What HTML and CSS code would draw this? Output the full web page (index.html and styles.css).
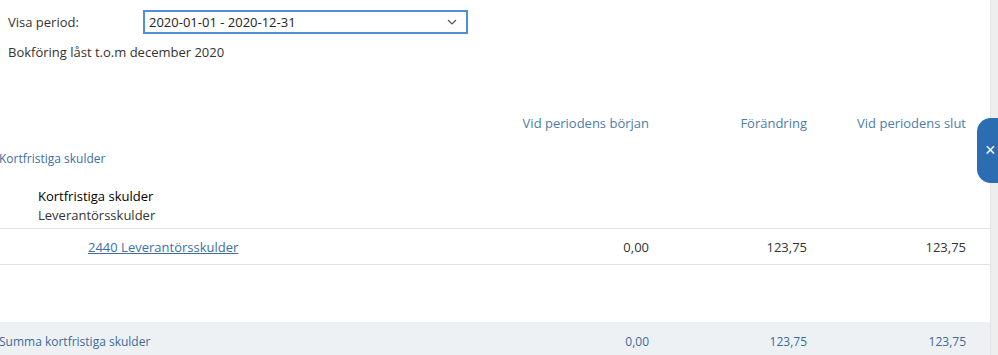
FILE: index.html
```html
<!DOCTYPE html>
<html lang="sv">
<head>
    <meta charset="UTF-8">
    <title>Balansrapport</title>
    <link rel="stylesheet" href="styles.css">
</head>
<body>

    <div class="page">
        <div class="filters">
            <div class="filter-row">
                <label class="filter-label" for="period">Visa period:</label>
                <div class="select">
                    <span>2020-01-01 - 2020-12-31</span>
                    <svg width="10" height="6" viewBox="0 0 10 6"><path d="M1 1l4 4 4-4" fill="none" stroke="#555" stroke-width="1.2"/></svg>
                </div>
            </div>
            <div class="locked">Bokföring låst t.o.m december 2020</div>
        </div>

        <div class="report">
            <div class="row head">
                <div></div>
                <div class="num">Vid periodens början</div>
                <div class="num">Förändring</div>
                <div class="num">Vid periodens slut</div>
            </div>

            <div class="section-title">Kortfristiga skulder</div>

            <div class="group">
                <div class="group-title">Kortfristiga skulder</div>
                <div class="group-sub">Leverantörsskulder</div>
            </div>

            <div class="row account">
                <div><a href="#">2440 Leverantörsskulder</a></div>
                <div class="num">0,00</div>
                <div class="num">123,75</div>
                <div class="num">123,75</div>
            </div>

            <div class="row total">
                <div class="total-label">Summa kortfristiga skulder</div>
                <div class="num">0,00</div>
                <div class="num">123,75</div>
                <div class="num">123,75</div>
            </div>
        </div>

        <div class="scroll-track"></div>
        <button class="side-tab">&times;</button>
    </div>

</body>
</html>
```

FILE: styles.css
```css
body {
    margin: 0;
    font-family: "Open Sans", Arial, sans-serif;
    font-size: 13px;
    color: #333;
    background: #fff;
    overflow: hidden;
}
.page {
    position: relative;
    height: 355px;
    padding-right: 8px;
}
.filters {
    padding: 10px 8px 0;
}
.filter-row {
    display: flex;
    align-items: center;
    height: 24px;
}
.filter-label {
    width: 135px;
}
.select {
    box-sizing: border-box;
    width: 325px;
    height: 24px;
    border: 2px solid #4d90d6;
    display: flex;
    align-items: center;
    justify-content: space-between;
    padding: 0 9px 0 4px;
    color: #222;
}
.locked {
    margin-top: 9px;
    line-height: 18px;
}
.report {
    margin-top: 52px;
}
.row {
    display: grid;
    grid-template-columns: 1fr 158px 158px 159px;
    padding-right: 24px;
    align-items: center;
}
.num {
    text-align: right;
}
.head {
    height: 20px;
    color: #4f7ca6;
}
.section-title {
    margin-top: 18px;
    margin-left: -1px;
    font-size: 12px;
    color: #3d6fa0;
    line-height: 16px;
}
.group {
    padding: 20px 0 3px 38px;
    font-size: 13px;
    line-height: 19px;
}
.group-title {
    color: #000;
    font-weight: 500;
}
.group-sub {
    color: #333;
}
.account {
    height: 35px;
    border-top: 1px solid #e2e2e2;
    border-bottom: 1px solid #e2e2e2;
}
.account a {
    margin-left: 88px;
    color: #3d6fa3;
}
.total {
    margin-top: 57px;
    height: 38px;
    background: #eef1f4;
    color: #3d6a98;
    font-size: 12px;
}
.total-label {
    margin-left: -1px;
}
.scroll-track {
    position: absolute;
    top: 0;
    right: 0;
    width: 7px;
    height: 100%;
    background: #eeeeee;
    border-left: 1px solid #e4e4e4;
}
.side-tab {
    position: absolute;
    top: 118px;
    right: 0;
    width: 21px;
    height: 65px;
    border: none;
    border-radius: 14px 0 0 14px;
    background: #2c6db1;
    color: #fff;
    font-size: 18px;
    padding: 0 0 0 8px;
    text-align: left;
    font-family: Arial, sans-serif;
}
```
